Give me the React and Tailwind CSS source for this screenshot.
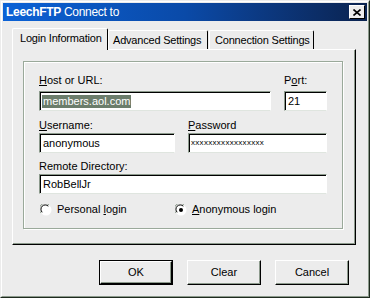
import React from 'react';

const font = { fontFamily: '"Liberation Sans", Arial, sans-serif' };

const Field = ({ className = '', value, selected, small }) => (
    <div className={`h-[20px] bg-white border border-t-[#8c9a8c] border-l-[#8c9a8c] border-r-white border-b-[#dfe5df] shadow-[inset_1px_1px_0_#000] pl-[2px] pt-[3px] flex items-start whitespace-nowrap ${className}`}>
        {selected ? (
            <span className="bg-[#6b7d6b] text-white text-[11px] leading-[13px] px-[1px]">{value}</span>
        ) : (
            <span className={`${small ? 'text-[8px] leading-[10px] tracking-[0.3px] pt-[1px]' : 'text-[11px] leading-[13px] pl-[1px]'} text-black`}>{value}</span>
        )}
    </div>
);

const Label = ({ children, className = '' }) => (
    <div className={`text-[11px] leading-[13px] text-black whitespace-nowrap ${className}`}>{children}</div>
);

const Radio = ({ checked }) => (
    <svg width="12" height="12" viewBox="0 0 12 12" className="shrink-0">
        <circle cx="6" cy="6" r="5.5" fill="#fff" />
        <path d="M1 9 A5.5 5.5 0 0 1 9 1" fill="none" stroke="#8c9a8c" strokeWidth="1" />
        <path d="M2.2 8.3 A4.3 4.3 0 0 1 8.3 2.2" fill="none" stroke="#000" strokeWidth="1" />
        {checked && <circle cx="6" cy="6" r="2" fill="#000" />}
    </svg>
);

const Button = ({ children, isDefault }) => (
    <div className={`w-[74px] h-[25px] ${isDefault ? 'border border-black' : ''}`}>
        <div className="w-full h-full bg-[#ececec] border border-t-white border-l-white border-r-black border-b-black shadow-[inset_-1px_-1px_0_#8c9a8c] flex items-center justify-center text-[11px] text-black">
            {children}
        </div>
    </div>
);

const Tab = ({ children, active, className = '' }) => (
    <div className={`${active ? 'relative z-10 h-[22px] -mb-[1px] bg-[#ececec] pt-[3px]' : 'h-[19px] pt-[3px]'} border-t border-l border-r border-t-white border-l-white border-r-black rounded-t-[2px] flex items-start text-[11px] leading-[13px] tracking-[-0.2px] text-black whitespace-nowrap ${className}`}>
        {children}
    </div>
);

const App = () => {
    return (
        <div style={font} className="w-[370px] h-[298px] bg-[#ececec] border border-t-[#ececec] border-l-[#ececec] border-r-[#1e2a1e] border-b-[#1e2a1e] overflow-hidden">
            <div className="w-full h-full border border-t-white border-l-white border-r-[#8c9a8c] border-b-[#8c9a8c] p-[1px] flex flex-col">
                {/* title bar */}
                <div className="h-[18px] bg-gradient-to-r from-[#0b62d6] via-[#0a4aa8] to-[#0a2350] flex items-center justify-between pl-[3px] pr-[2px]">
                    <div className="text-white text-[12px] leading-[14px] tracking-[-0.3px] whitespace-nowrap">
                        <span className="font-bold">LeechFTP</span> Connect to
                    </div>
                    <div className="w-[16px] h-[14px] bg-[#ececec] border border-t-white border-l-white border-r-black border-b-black flex items-center justify-center">
                        <svg width="8" height="7" viewBox="0 0 8 7">
                            <path d="M0.5 0.5 L7.5 6.5 M7.5 0.5 L0.5 6.5" stroke="#000" strokeWidth="1.6" />
                        </svg>
                    </div>
                </div>

                {/* tabs */}
                <div className="pl-[9px] pr-[11px] mt-[6px]">
                    <div className="flex items-end h-[22px]">
                        <Tab active className="w-[96px] pl-[7px]">Login Information</Tab>
                        <Tab className="w-[100px] pl-[4px]">Advanced Settings</Tab>
                        <Tab className="w-[105px] ml-[1px] pl-[5px]">Connection Settings</Tab>
                    </div>

                    {/* tab panel */}
                    <div className="h-[196px] border border-t-white border-l-white border-r-black border-b-black shadow-[inset_-1px_-1px_0_#8c9a8c] pt-[11px] pl-[10px] pr-[12px]">
                        {/* group box */}
                        <div className="w-[320px] h-[168px] border border-[#9aa99a] shadow-[inset_1px_1px_0_#fff,1px_1px_0_#fff] pl-[15px] pt-[12px]">
                            <div className="flex gap-[13px]">
                                <div className="w-[232px]">
                                    <Label><u>H</u>ost or URL:</Label>
                                    <Field className="mt-[4px]" value="members.aol.com" selected />
                                </div>
                                <div className="w-[43px]">
                                    <Label>P<u>o</u>rt:</Label>
                                    <Field className="mt-[4px]" value="21" />
                                </div>
                            </div>
                            <div className="flex gap-[13px] mt-[8px]">
                                <div className="w-[136px]">
                                    <Label><u>U</u>sername:</Label>
                                    <Field className="mt-[1px]" value="anonymous" />
                                </div>
                                <div className="w-[139px]">
                                    <Label><u>P</u>assword</Label>
                                    <Field className="mt-[1px]" value="xxxxxxxxxxxxxxxxx" small />
                                </div>
                            </div>
                            <div className="w-[288px] mt-[7px]">
                                <Label>Remote Directory:</Label>
                                <Field className="mt-[1px]" value="RobBellJr" />
                            </div>
                            <div className="flex items-center mt-[9px] text-[11px] leading-[13px] text-black">
                                <div className="w-[136px] flex items-center gap-[5px] pl-[1px]">
                                    <Radio />
                                    <span>Personal <u>l</u>ogin</span>
                                </div>
                                <div className="flex items-center gap-[5px]">
                                    <Radio checked />
                                    <span><u>A</u>nonymous login</span>
                                </div>
                            </div>
                        </div>
                    </div>
                </div>

                {/* buttons */}
                <div className="flex gap-[14px] pl-[96px] mt-[15px]">
                    <Button isDefault>OK</Button>
                    <Button>Clear</Button>
                    <Button>Cancel</Button>
                </div>
            </div>
        </div>
    );
};

export default App;
